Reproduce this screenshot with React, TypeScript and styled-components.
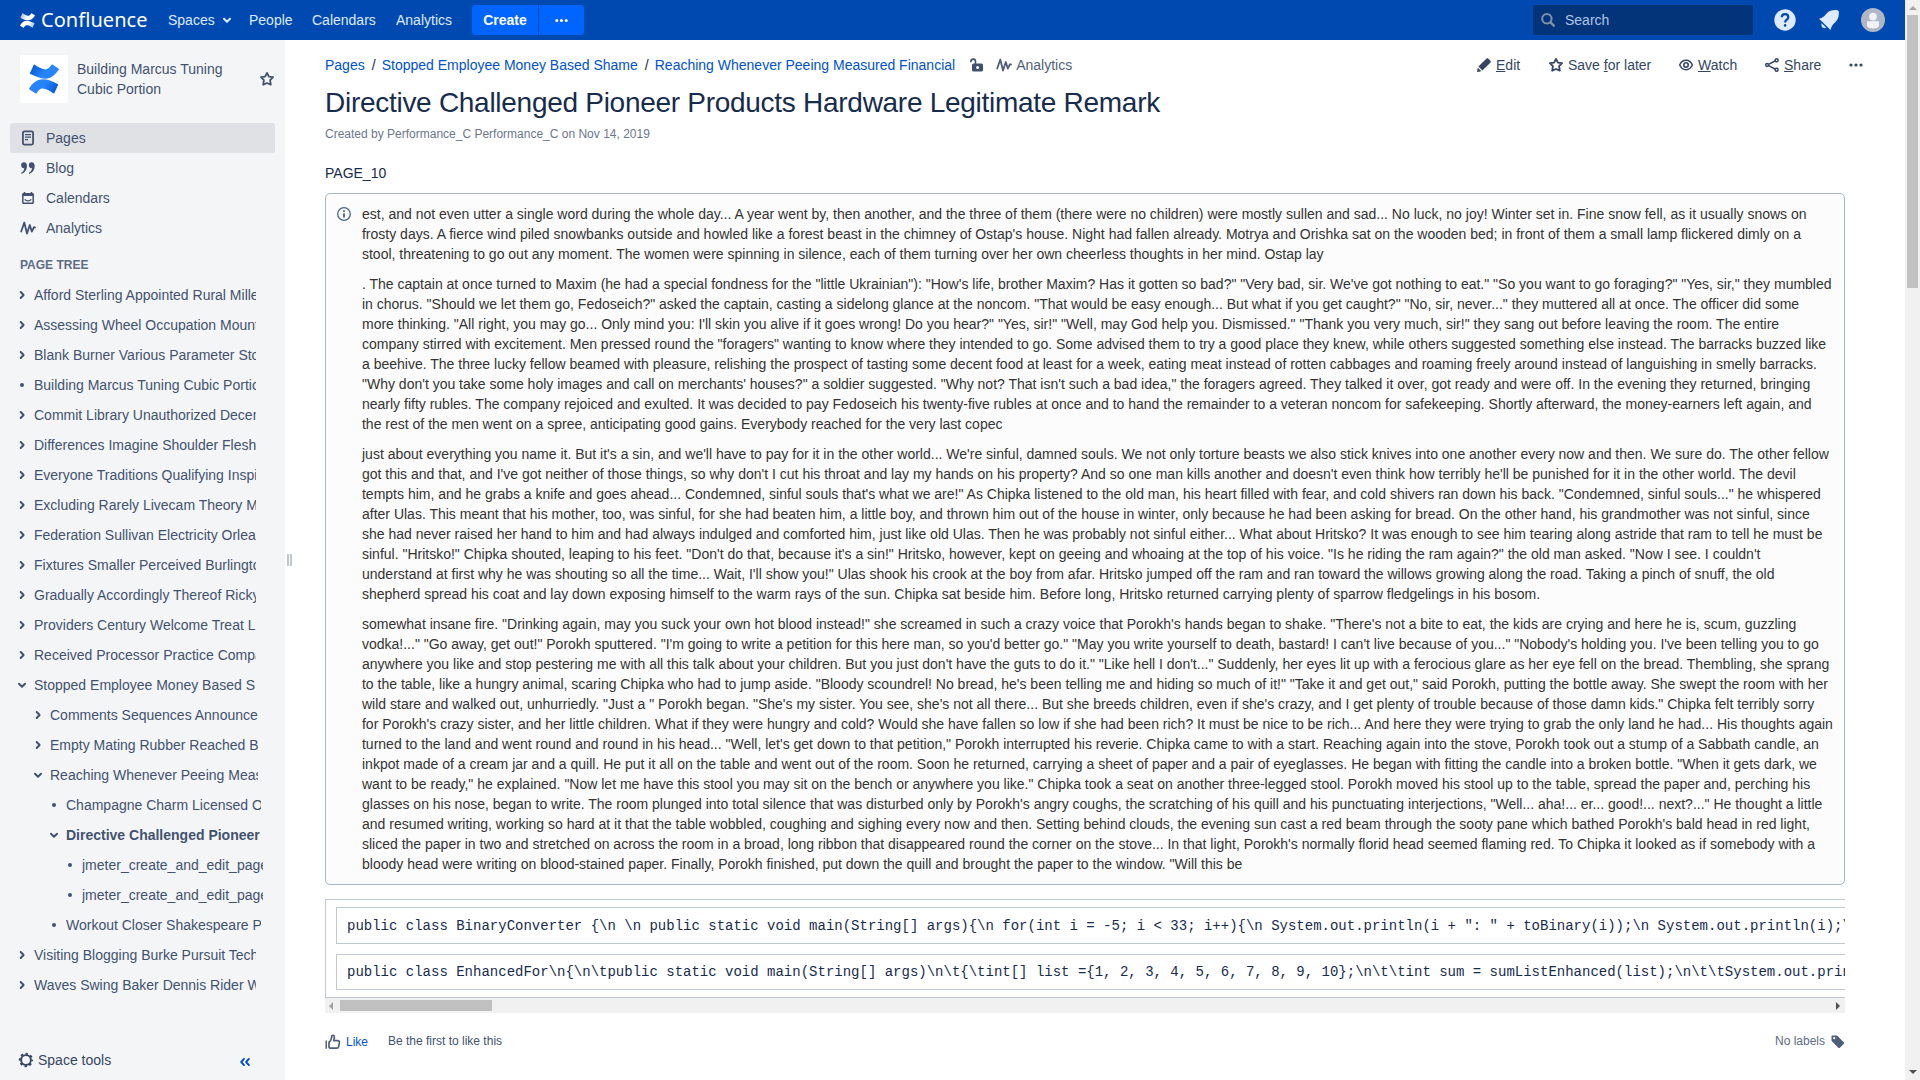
import React from 'react';
import styled, { createGlobalStyle, css } from 'styled-components';

const Global = createGlobalStyle`
  *, *::before, *::after { box-sizing: border-box; }
  html, body { margin: 0; padding: 0; height: 100%; overflow: hidden; background: #fff; }
  body {
    font-family: "Liberation Sans", Arial, sans-serif;
    font-size: 14px;
    line-height: 20px;
    color: #172b4d;
  }
  p, h1, ul, pre { margin: 0; padding: 0; font-weight: normal; }
  svg { display: block; flex: none; }
`;

const Window = styled.div`
  display: flex;
  width: 1920px;
  height: 1080px;
  overflow: hidden;
`;
const Page = styled.div`
  display: flex;
  flex-direction: column;
  width: 1905px;
`;

/* ---------- header ---------- */
const Header = styled.header`
  display: flex;
  align-items: center;
  height: 40px;
  background: #0049b0;
  color: #deebff;
  padding: 0 20px;
`;
const Brand = styled.a`
  display: flex;
  align-items: center;
  width: 148px;
  color: #fff;
`;
const Wordmark = styled.span`
  margin-left: 6px;
  font-family: "Noto Sans", "Open Sans", sans-serif;
  font-size: 20px;
  line-height: 40px;
  letter-spacing: 0.05px;
  white-space: nowrap;
`;
const NavItem = styled.a<{ $w: number }>`
  display: flex;
  align-items: center;
  width: ${(p) => p.$w}px;
  gap: 4px;
  white-space: nowrap;
`;
const ButtonGroup = styled.div`
  display: flex;
  gap: 1px;
  height: 30px;
  border-radius: 3px;
  overflow: hidden;
`;
const HeaderButton = styled.button<{ $w: number }>`
  display: flex;
  align-items: center;
  justify-content: center;
  width: ${(p) => p.$w}px;
  border: 0;
  padding: 0;
  background: #0065ff;
  color: #fff;
  font: bold 14px/20px "Liberation Sans", Arial, sans-serif;
`;
const Search = styled.div`
  display: flex;
  align-items: center;
  gap: 10px;
  width: 220px;
  height: 30px;
  margin-left: auto;
  padding-left: 8px;
  border-radius: 3px;
  background: #03347a;
  color: #b0c4e3;
`;
const HeaderIcons = styled.div`
  display: flex;
  align-items: center;
  gap: 20px;
  margin-left: 20px;
`;

/* ---------- sidebar ---------- */
const Body = styled.div`
  display: flex;
  flex: 1;
  min-height: 0;
`;
const Sidebar = styled.aside`
  display: flex;
  flex-direction: column;
  width: 285px;
  background: #f4f5f7;
  color: #42526e;
`;
const SpaceHead = styled.div`
  display: flex;
  align-items: center;
  height: 48px;
  margin: 15px 10px 20px 20px;
`;
const SpaceLogo = styled.div`
  display: flex;
  align-items: center;
  justify-content: center;
  width: 48px;
  height: 48px;
  border-radius: 3px;
  background: #fff;
`;
const SpaceName = styled.div`
  flex: 1;
  margin-left: 9px;
  padding-right: 30px;
`;
const SideLink = styled.a<{ $active?: boolean }>`
  display: flex;
  align-items: center;
  gap: 10px;
  height: 30px;
  margin: 0 10px;
  padding-left: 10px;
  border-radius: 3px;
  ${(p) => p.$active && css`background: #dfe1e5;`}
`;
const TreeTitle = styled.div`
  margin: 12px 0 5px;
  padding: 0 20px;
  height: 20px;
  font-size: 12px;
  font-weight: bold;
  color: #5e6c84;
`;
const TreeRow = styled.div<{ $depth: number; $bold?: boolean }>`
  display: flex;
  align-items: center;
  height: 30px;
  margin-left: ${(p) => 14 + p.$depth * 16}px;
  font-weight: ${(p) => (p.$bold ? 'bold' : 'normal')};
`;
const TreeText = styled.span<{ $w: number }>`
  width: ${(p) => p.$w}px;
  margin-left: 4px;
  overflow: hidden;
  white-space: nowrap;
`;
const SideFoot = styled.div`
  display: flex;
  align-items: center;
  justify-content: space-between;
  height: 40px;
  margin-top: auto;
  padding: 0 35px 0 18px;
  color: #344563;
`;
const Tools = styled.span`
  display: flex;
  align-items: center;
  gap: 4px;
`;
const CollapseButton = styled.a`
  padding-top: 4px;
`;
const Grip = styled.div`
  display: flex;
  align-items: center;
  gap: 1px;
  width: 10px;
  padding-left: 2px;
`;
const GripBar = styled.i`
  width: 2px;
  height: 12px;
  background: #c1c7d0;
`;

/* ---------- content ---------- */
const Main = styled.main`
  display: flex;
  flex-direction: column;
  width: 1610px;
  padding: 0 0 0 30px;
`;
const TopRow = styled.div`
  display: flex;
  align-items: center;
  width: 1539px;
  height: 20px;
  margin-top: 15px;
`;
const Crumb = styled.a`
  color: #0052cc;
`;
const Slash = styled.span`
  width: 17px;
  padding-left: 7px;
  color: #172b4d;
`;
const CrumbMeta = styled.span<{ $gap: number }>`
  display: flex;
  align-items: center;
  margin-left: ${(p) => p.$gap}px;
  color: #505f79;
  gap: 4px;
`;
const Actions = styled.div`
  display: flex;
  align-items: center;
  margin-left: auto;
  color: #344563;
`;
const Action = styled.a<{ $w: number }>`
  display: flex;
  align-items: center;
  gap: 4px;
  width: ${(p) => p.$w}px;
  white-space: pre;
`;
const Title = styled.h1`
  margin-top: 12px;
  font-size: 28px;
  line-height: 32px;
  letter-spacing: -0.28px;
  white-space: nowrap;
`;
const Meta = styled.div`
  margin-top: 5px;
  font-size: 12px;
  color: #6b778c;
`;
const Paragraph = styled.p`
  margin-top: 19px;
`;
const Panel = styled.section`
  display: flex;
  width: 1520px;
  margin-top: 10px;
  padding: 10px;
  border: 1px solid #aab8c6;
  border-radius: 5px;
  background: #fcfcfc;
  color: #333;
`;
const PanelIcon = styled.div`
  width: 26px;
  padding-top: 2px;
`;
const PanelText = styled.div`
  display: flex;
  flex-direction: column;
  gap: 10px;
  width: 1473px;
`;
const CodeScroll = styled.div`
  width: 1520px;
  margin-top: 14px;
  overflow: hidden;
`;
const CodeTable = styled.div`
  display: flex;
  flex-direction: column;
  gap: 10px;
  height: 99px;
  padding: 7px 10px;
  border: 1px solid #c1c7d0;
  border-right: 0;
`;
const Code = styled.pre<{ $h: number; $top: number }>`
  width: 1600px;
  height: ${(p) => p.$h}px;
  padding: ${(p) => p.$top}px 10px 0;
  border: 1px solid #c1c7d0;
  font: 14px/20px "Liberation Mono", "Courier New", monospace;
`;
const HScroll = styled.div`
  display: flex;
  align-items: center;
  width: 1520px;
  height: 15px;
  background: #f1f1f1;
`;
const HThumb = styled.div`
  width: 152px;
  height: 11px;
  background: #c1c1c1;
`;
const Arrow = styled.i<{ $dir: 'up' | 'down' | 'left' | 'right'; $dim?: boolean }>`
  width: 0;
  height: 0;
  border: 4px solid transparent;
  ${(p) => {
    const c = p.$dim ? '#a3a3a3' : '#505050';
    if (p.$dir === 'up') return css`border-top: 0; border-bottom-color: ${c}; margin: 6px 0 5px;`;
    if (p.$dir === 'down') return css`border-bottom: 0; border-top-color: ${c}; margin: auto 0 6px;`;
    if (p.$dir === 'left') return css`border-left: 0; border-right-color: ${c}; margin: 0 7px 0 4px;`;
    return css`border-right: 0; border-left-color: ${c}; margin: 0 5px 0 auto;`;
  }}
`;
const Footer = styled.div`
  display: flex;
  align-items: center;
  width: 1520px;
  height: 20px;
  margin-top: 18px;
  font-size: 12px;
  color: #42526e;
`;
const Like = styled.a`
  display: flex;
  align-items: center;
  width: 63px;
  gap: 5px;
  padding-top: 2px;
  color: #0052cc;
`;
const Labels = styled.span`
  display: flex;
  align-items: center;
  gap: 5px;
  margin-left: auto;
  color: #5e6c84;
`;
const VScroll = styled.div`
  display: flex;
  flex-direction: column;
  align-items: center;
  width: 15px;
  height: 1080px;
  background: #f1f1f1;
`;
const VThumb = styled.div`
  width: 11px;
  height: 273px;
  background: #c1c1c1;
`;

/* ---------- icons ---------- */
const Chevron = ({ size = 16, down }: { size?: number; down?: boolean }) => (
  <svg width={size} height={16} viewBox="0 0 16 16" fill="none" stroke="currentColor" strokeWidth="2" strokeLinecap="round" strokeLinejoin="round">
    <path d={down ? 'M5 6.8l3 2.9 3-2.9' : 'M6.7 5l2.9 3-2.9 3'} />
  </svg>
);
const Dot = () => (
  <svg width="16" height="16" viewBox="0 0 16 16"><circle cx="8" cy="8" r="2" fill="currentColor" /></svg>
);
const Dots = ({ size = 16 }: { size?: number }) => (
  <svg width={size} height={size} viewBox="0 0 16 16" fill="currentColor">
    <circle cx="3" cy="8" r="1.6" /><circle cx="8" cy="8" r="1.6" /><circle cx="13" cy="8" r="1.6" />
  </svg>
);
const Logo = ({ w, id, a, b }: { w: number; id: string; a: string; b: string }) => (
  <svg width={w} height={w} viewBox="0 0 30 30">
    <defs>
      <linearGradient id={id + 't'} x1="0" y1="0" x2="1" y2="0.3"><stop offset="0" stopColor={a} /><stop offset="0.6" stopColor={b} /></linearGradient>
      <linearGradient id={id + 'b'} x1="1" y1="1" x2="0" y2="0.7"><stop offset="0" stopColor={a} /><stop offset="0.6" stopColor={b} /></linearGradient>
    </defs>
    <path fill={`url(#${id}t)`} d="M4.600 0.900C3.600 3.400 2.200 6.400 0.900 9.100Q0.800 9.700 1.400 10C7 12.700 11.500 14.700 16 14.700C22.500 14.700 26.500 10.700 29.800 5.600Q30.100 5 29.500 4.600L23.300 0.500Q22.800 0.200 22.400 0.800C20 4.700 18.200 5.700 15.300 5.300C12 4.800 9 3.100 5.400 0.600Q4.800 0.300 4.600 0.900Z" />
    <path fill={`url(#${id}b)`} d="M25.400 29.100C26.400 26.600 27.800 23.600 29.100 20.900Q29.200 20.300 28.600 20C23 17.300 18.500 15.300 14 15.300C7.500 15.300 3.500 19.300 0.200 24.400Q-0.100 25 0.500 25.400L6.700 29.500Q7.200 29.800 7.600 29.200C10 25.300 11.800 24.300 14.700 24.700C18 25.200 21 26.900 24.600 29.400Q25.200 29.700 25.400 29.100Z" />
  </svg>
);
const Star = () => (
  <svg width="16" height="16" viewBox="0 0 16 16" fill="none" stroke="currentColor" strokeWidth="1.8" strokeLinejoin="round">
    <path d="M8 1.900l1.900 3.700 4.200.5-3 3 .7 4.600L8 12l-3.800 1.700.7-4.600-3-3 4.200-.5z" />
  </svg>
);
const PageIcon = () => (
  <svg width="16" height="16" viewBox="0 0 16 16" fill="none" stroke="currentColor">
    <rect x="2.9" y="1.4" width="10.2" height="13.2" rx="1.5" strokeWidth="1.8" />
    <path d="M5 4.600h6M5 7.200h6M5 9.700h3" strokeWidth="1.2" />
  </svg>
);
const QuoteIcon = () => (
  <svg width="16" height="16" viewBox="0 0 16 16" fill="currentColor">
    <path d="M4 2.200a3 3 0 1 0 .3 6c-.3 2-1.300 3.500-3 4.600-.5.4-.1 1.200.6.9C5.200 12.300 7 9.500 7 6 7 3.500 5.800 2.200 4 2.200z" />
    <path d="M11.700 2.200a3 3 0 1 0 .3 6c-.3 2-1.300 3.500-3 4.600-.5.4-.1 1.200.6.9C12.900 12.300 14.700 9.500 14.700 6c0-2.500-1.200-3.800-3-3.800z" />
  </svg>
);
const CalendarIcon = () => (
  <svg width="16" height="16" viewBox="0 0 16 16" fill="none" stroke="currentColor">
    <rect x="2.8" y="3.8" width="10.4" height="9.4" rx="0.8" strokeWidth="1.5" />
    <path d="M2.500 4.800h11" strokeWidth="2.4" />
    <path d="M4.500 2v3M11.500 2v3" strokeWidth="1.6" />
    <path d="M4.800 9.300c1.200 2 5.200 2 6.400 0" strokeWidth="1.3" />
  </svg>
);
const AnalyticsIcon = () => (
  <svg width="16" height="16" viewBox="0 0 16 16" fill="none" stroke="currentColor" strokeWidth="1.8" strokeLinecap="round" strokeLinejoin="round">
    <path d="M1.200 11.500L4.300 2.500 7 13.500 9.800 5l2 6.500 2.200-4.300 1 .3" />
  </svg>
);
const GearIcon = () => (
  <svg width="16" height="16" viewBox="0 0 16 16" fill="none" stroke="currentColor">
    <circle cx="8" cy="8" r="4.9" strokeWidth="1.9" />
    <circle cx="8" cy="8" r="6.2" strokeWidth="1.9" strokeDasharray="2.4 2.47" strokeDashoffset="1.2" />
  </svg>
);
const CollapseIcon = () => (
  <svg width="10" height="10" viewBox="0 0 10 10" fill="none" stroke="#0052cc" strokeWidth="1.9" strokeLinecap="round" strokeLinejoin="round">
    <path d="M4 1.900L1.200 5 4 8.100M8.900 1.900L6.100 5l2.800 3.100" />
  </svg>
);
const SearchIcon = () => (
  <svg width="14" height="14" viewBox="0 0 14 14" fill="none" stroke="#8291a8" strokeLinecap="round">
    <circle cx="5.9" cy="5.7" r="4.7" strokeWidth="2" /><path d="M9.500 9.400l3.300 3.300" strokeWidth="2.4" />
  </svg>
);
const HelpIcon = () => (
  <svg width="24" height="24" viewBox="0 0 24 24" fill="none">
    <circle cx="12" cy="12" r="10.7" fill="#deebff" />
    <path d="M8.800 9.300c0-4.200 6.500-4.100 6.500-.1 0 2.400-3.200 2.600-3.200 5.300" stroke="#0049b0" strokeWidth="2.2" />
    <circle cx="12.1" cy="17.4" r="1.3" fill="#0049b0" />
  </svg>
);
const BellIcon = () => (
  <svg width="24" height="24" viewBox="0 0 24 24" fill="#deebff">
    <path d="M2 10.800c3.800-.8 5.600-2.600 7.600-5.300C12 2.500 15.500 1.800 20.200 2l1.700 1.500c.2 4.700-.8 8.300-3.800 11-2.600 2.100-3.800 4-4.500 7.400z" />
    <path d="M4.600 15.200l4.500 4.400c-2.600 1.800-5.400-1.200-4.500-4.400z" />
  </svg>
);
const Avatar = () => (
  <svg width="24" height="24" viewBox="0 0 24 24">
    <circle cx="12" cy="12" r="12" fill="#b0b7c4" />
    <circle cx="12" cy="8.6" r="3.9" fill="#f1f2f5" />
    <path d="M6 13.200h12v4.300c0 4-12 4-12 0z" fill="#f1f2f5" />
  </svg>
);
const LockIcon = () => (
  <svg width="16" height="16" viewBox="0 0 16 16" fill="none">
    <path d="M1.900 5.200V4.400a2.300 2.300 0 0 1 4.600 0V7" stroke="#42526e" strokeWidth="1.6" />
    <path fillRule="evenodd" fill="#42526e" d="M4.500 6.500h8a1.500 1.500 0 0 1 1.500 1.500v5a1.500 1.500 0 0 1-1.500 1.500h-8A1.500 1.500 0 0 1 3 13V8a1.500 1.500 0 0 1 1.500-1.500zM8.600 9a1.500 1.500 0 1 0 0 3 1.500 1.500 0 0 0 0-3z" />
  </svg>
);
const PencilIcon = () => (
  <svg width="16" height="16" viewBox="0 0 16 16" fill="currentColor">
    <path d="M2.400 9.600L9.800 2.200c.7-1 1.700-1.300 2.500-.6l2.100 2.100c.7.800.4 1.800-.6 2.500l-7.400 7.400zM1.800 10.700l3.500 3.500-3.600.7c-.4.100-.7-.2-.6-.6z" />
  </svg>
);
const EyeIcon = () => (
  <svg width="16" height="16" viewBox="0 0 16 16" fill="none" stroke="currentColor">
    <path d="M1.700 8C4.300 1.800 11.700 1.800 14.300 8 11.700 14.200 4.300 14.200 1.700 8z" strokeWidth="1.5" />
    <circle cx="8" cy="8" r="2.2" strokeWidth="1.6" />
  </svg>
);
const ShareIcon = () => (
  <svg width="16" height="16" viewBox="0 0 16 16" fill="none" stroke="currentColor" strokeWidth="1.5">
    <circle cx="3.1" cy="8" r="1.4" /><circle cx="12.6" cy="3.3" r="1.5" /><circle cx="12.6" cy="12.7" r="1.5" />
    <path d="M4.500 7.300l6.600-3.300M4.500 8.700l6.600 3.300" />
  </svg>
);
const InfoIcon = () => (
  <svg width="16" height="16" viewBox="0 0 16 16" fill="none" stroke="#4a6785">
    <circle cx="8" cy="8" r="6.3" strokeWidth="1.3" />
    <path d="M8 7.200V11.500M8 4.300V6" strokeWidth="1.8" />
  </svg>
);
const ThumbIcon = () => (
  <svg width="16" height="16" viewBox="0 0 16 16" fill="none" stroke="#505f79" strokeWidth="1.7" strokeLinejoin="round">
    <path d="M1.200 6.500v8.300" strokeWidth="1.5" />
    <path d="M4 12.800V8.200C6 6.800 6.600 4.600 6.800 2.200c.2-1.500 2.600-1.200 2.600.8 0 1.500-.5 2.700-.7 3.700h4c1.500 0 1.900 1 1.700 2l-.8 4.200c-.2.900-.8 1.300-1.600 1.300H5.600c-.9 0-1.600-.5-1.600-1.400z" />
  </svg>
);
const TagIcon = () => (
  <svg width="15" height="15" viewBox="0 0 16 16">
    <path fillRule="evenodd" fill="#505f79" d="M2.500 1.500h4.200c.6 0 1 .2 1.400.6l6.300 6.300c.8.800.8 1.500.1 2.200l-3.700 3.700c-.8.800-1.500.7-2.200 0L2.200 8C1.700 7.500 1.600 7 1.600 6.500V2.400c0-.5.300-.9.900-.9zM4.500 3.200a1.200 1.200 0 1 0 0 2.400 1.200 1.200 0 0 0 0-2.400z" />
  </svg>
);

/* ---------- data ---------- */
type Node = { t: string; d?: number; k?: 'open' | 'leaf'; bold?: boolean };
const clipWidth = [222, 208, 195, 181];
const tree: Node[] = [
  { t: 'Afford Sterling Appointed Rural Miller' },
  { t: 'Assessing Wheel Occupation Mounting' },
  { t: 'Blank Burner Various Parameter Stocks' },
  { t: 'Building Marcus Tuning Cubic Portion', k: 'leaf' },
  { t: 'Commit Library Unauthorized December' },
  { t: 'Differences Imagine Shoulder Flesh' },
  { t: 'Everyone Traditions Qualifying Inspired' },
  { t: 'Excluding Rarely Livecam Theory Men' },
  { t: 'Federation Sullivan Electricity Orleans' },
  { t: 'Fixtures Smaller Perceived Burlington' },
  { t: 'Gradually Accordingly Thereof Ricky' },
  { t: 'Providers Century Welcome Treat L' },
  { t: 'Received Processor Practice Compare' },
  { t: 'Stopped Employee Money Based S', k: 'open' },
  { t: 'Comments Sequences Announce', d: 1 },
  { t: 'Empty Mating Rubber Reached B', d: 1 },
  { t: 'Reaching Whenever Peeing Measured Financial', d: 1, k: 'open' },
  { t: 'Champagne Charm Licensed Oven', d: 2, k: 'leaf' },
  { t: 'Directive Challenged Pioneer Products', d: 2, k: 'open', bold: true },
  { t: 'jmeter_create_and_edit_page', d: 3, k: 'leaf' },
  { t: 'jmeter_create_and_edit_page', d: 3, k: 'leaf' },
  { t: 'Workout Closer Shakespeare P', d: 2, k: 'leaf' },
  { t: 'Visiting Blogging Burke Pursuit Tech' },
  { t: 'Waves Swing Baker Dennis Rider W' },
];

const paragraphs = [
  `est, and not even utter a single word during the whole day... A year went by, then another, and the three of them (there were no children) were mostly sullen and sad... No luck, no joy! Winter set in. Fine snow fell, as it usually snows on frosty days. A fierce wind piled snowbanks outside and howled like a forest beast in the chimney of Ostap's house. Night had fallen already. Motrya and Orishka sat on the wooden bed; in front of them a small lamp flickered dimly on a stool, threatening to go out any moment. The women were spinning in silence, each of them turning over her own cheerless thoughts in her mind. Ostap lay`,
  `. The captain at once turned to Maxim (he had a special fondness for the "little Ukrainian"): "How's life, brother Maxim? Has it gotten so bad?" "Very bad, sir. We've got nothing to eat." "So you want to go foraging?" "Yes, sir," they mumbled in chorus. "Should we let them go, Fedoseich?" asked the captain, casting a sidelong glance at the noncom. "That would be easy enough... But what if you get caught?" "No, sir, never..." they muttered all at once. The officer did some more thinking. "All right, you may go... Only mind you: I'll skin you alive if it goes wrong! Do you hear?" "Yes, sir!" "Well, may God help you. Dismissed." "Thank you very much, sir!" they sang out before leaving the room. The entire company stirred with excitement. Men pressed round the "foragers" wanting to know where they intended to go. Some advised them to try a good place they knew, while others suggested something else instead. The barracks buzzed like a beehive. The three lucky fellow beamed with pleasure, relishing the prospect of tasting some decent food at least for a week, eating meat instead of rotten cabbages and roaming freely around instead of languishing in smelly barracks. "Why don't you take some holy images and call on merchants' houses?" a soldier suggested. "Why not? That isn't such a bad idea," the foragers agreed. They talked it over, got ready and were off. In the evening they returned, bringing nearly fifty rubles. The company rejoiced and exulted. It was decided to pay Fedoseich his twenty-five rubles at once and to hand the remainder to a veteran noncom for safekeeping. Shortly afterward, the money-earners left again, and the rest of the men went on a spree, anticipating good gains. Everybody reached for the very last copec`,
  `just about everything you name it. But it's a sin, and we'll have to pay for it in the other world... We're sinful, damned souls. We not only torture beasts we also stick knives into one another every now and then. We sure do. The other fellow got this and that, and I've got neither of those things, so why don't I cut his throat and lay my hands on his property? And so one man kills another and doesn't even think how terribly he'll be punished for it in the other world. The devil tempts him, and he grabs a knife and goes ahead... Condemned, sinful souls that's what we are!" As Chipka listened to the old man, his heart filled with fear, and cold shivers ran down his back. "Condemned, sinful souls..." he whispered after Ulas. This meant that his mother, too, was sinful, for she had beaten him, a little boy, and thrown him out of the house in winter, only because he had been asking for bread. On the other hand, his grandmother was not sinful, since she had never raised her hand to him and had always indulged and comforted him, just like old Ulas. Then he was probably not sinful either... What about Hritsko? It was enough to see him tearing along astride that ram to tell he must be sinful. "Hritsko!" Chipka shouted, leaping to his feet. "Don't do that, because it's a sin!" Hritsko, however, kept on geeing and whoaing at the top of his voice. "Is he riding the ram again?" the old man asked. "Now I see. I couldn't understand at first why he was shouting so all the time... Wait, I'll show you!" Ulas shook his crook at the boy from afar. Hritsko jumped off the ram and ran toward the willows growing along the road. Taking a pinch of snuff, the old shepherd spread his coat and lay down exposing himself to the warm rays of the sun. Chipka sat beside him. Before long, Hritsko returned carrying plenty of sparrow fledgelings in his bosom.`,
  `somewhat insane fire. "Drinking again, may you suck your own hot blood instead!" she screamed in such a crazy voice that Porokh's hands began to shake. "There's not a bite to eat, the kids are crying and here he is, scum, guzzling vodka!..." "Go away, get out!" Porokh sputtered. "I'm going to write a petition for this here man, so you'd better go." "May you write yourself to death, bastard! I can't live because of you..." "Nobody's holding you. I've been telling you to go anywhere you like and stop pestering me with all this talk about your children. But you just don't have the guts to do it." "Like hell I don't..." Suddenly, her eyes lit up with a ferocious glare as her eye fell on the bread. Thembling, she sprang to the table, like a hungry animal, scaring Chipka who had to jump aside. "Bloody scoundrel! No bread, he's been telling me and hiding so much of it!" "Take it and get out," said Porokh, putting the bottle away. She swept the room with her wild stare and walked out, unhurriedly. "Just a " Porokh began. "She's my sister. You see, she's not all there... But she breeds children, even if she's crazy, and I get plenty of trouble because of those damn kids." Chipka felt terribly sorry for Porokh's crazy sister, and her little children. What if they were hungry and cold? Would she have fallen so low if she had been rich? It must be nice to be rich... And here they were trying to grab the only land he had... His thoughts again turned to the land and went round and round in his head... "Well, let's get down to that petition," Porokh interrupted his reverie. Chipka came to with a start. Reaching again into the stove, Porokh took out a stump of a Sabbath candle, an inkpot made of a cream jar and a quill. He put it all on the table and went out of the room. Soon he returned, carrying a sheet of paper and a pair of eyeglasses. He began with fitting the candle into a broken bottle. "When it gets dark, we want to be ready," he explained. "Now let me have this stool you may sit on the bench or anywhere you like." Chipka took a seat on another three-legged stool. Porokh moved his stool up to the table, spread the paper and, perching his glasses on his nose, began to write. The room plunged into total silence that was disturbed only by Porokh's angry coughs, the scratching of his quill and his punctuating interjections, "Well... aha!... er... good!... next?..." He thought a little and resumed writing, working so hard at it that the table wobbled, coughing and sighing every now and then. Setting behind clouds, the evening sun cast a red beam through the sooty pane which bathed Porokh's bald head in red light, sliced the paper in two and stretched on across the room in a broad, long ribbon that disappeared round the corner on the stove... In that light, Porokh's normally florid head seemed flaming red. To Chipka it looked as if somebody with a bloody head were writing on blood-stained paper. Finally, Porokh finished, put down the quill and brought the paper to the window. "Will this be`,
];

const code1 = String.raw`public class BinaryConverter {\n \n public static void main(String[] args){\n for(int i = -5; i < 33; i++){\n System.out.println(i + ": " + toBinary(i));\n System.out.println(i);\n`;
const code2 = String.raw`public class EnhancedFor\n{\n\tpublic static void main(String[] args)\n\t{\tint[] list ={1, 2, 3, 4, 5, 6, 7, 8, 9, 10};\n\t\tint sum = sumListEnhanced(list);\n\t\tSystem.out.println`;

export default function App() {
  return (
    <Window>
      <Global />
      <Page>
        <Header>
          <Brand>
            <Logo w={15} id="h" a="#8fb1e3" b="#ffffff" />
            <Wordmark>Confluence</Wordmark>
          </Brand>
          <NavItem $w={81}>Spaces<Chevron down /></NavItem>
          <NavItem $w={63}>People</NavItem>
          <NavItem $w={84}>Calendars</NavItem>
          <NavItem $w={76}>Analytics</NavItem>
          <ButtonGroup>
            <HeaderButton $w={66}>Create</HeaderButton>
            <HeaderButton $w={45}><Dots size={15} /></HeaderButton>
          </ButtonGroup>
          <Search><SearchIcon />Search</Search>
          <HeaderIcons><HelpIcon /><BellIcon /><Avatar /></HeaderIcons>
        </Header>
        <Body>
          <Sidebar>
            <SpaceHead>
              <SpaceLogo><Logo w={30} id="s" a="#0052cc" b="#2684ff" /></SpaceLogo>
              <SpaceName>Building Marcus Tuning Cubic Portion</SpaceName>
              <Star />
            </SpaceHead>
            <SideLink $active><PageIcon />Pages</SideLink>
            <SideLink><QuoteIcon />Blog</SideLink>
            <SideLink><CalendarIcon />Calendars</SideLink>
            <SideLink><AnalyticsIcon />Analytics</SideLink>
            <TreeTitle>PAGE TREE</TreeTitle>
            {tree.map((n, i) => (
              <TreeRow key={i} $depth={n.d ?? 0} $bold={n.bold}>
                {n.k === 'leaf' ? <Dot /> : <Chevron down={n.k === 'open'} />}
                <TreeText $w={clipWidth[n.d ?? 0]}>{n.t}</TreeText>
              </TreeRow>
            ))}
            <SideFoot>
              <Tools><GearIcon />Space tools</Tools>
              <CollapseButton><CollapseIcon /></CollapseButton>
            </SideFoot>
          </Sidebar>
          <Grip><GripBar /><GripBar /></Grip>
          <Main>
            <TopRow>
              <Crumb>Pages</Crumb><Slash>/</Slash>
              <Crumb>Stopped Employee Money Based Shame</Crumb><Slash>/</Slash>
              <Crumb>Reaching Whenever Peeing Measured Financial</Crumb>
              <CrumbMeta $gap={14}><LockIcon /></CrumbMeta>
              <CrumbMeta $gap={11}><AnalyticsIcon />Analytics</CrumbMeta>
              <Actions>
                <Action $w={72}><PencilIcon /><span><u>E</u>dit</span></Action>
                <Action $w={130}><Star /><span>Save <u>f</u>or later</span></Action>
                <Action $w={86}><EyeIcon /><span><u>W</u>atch</span></Action>
                <Action $w={84}><ShareIcon /><span><u>S</u>hare</span></Action>
                <Dots />
              </Actions>
            </TopRow>
            <Title>Directive Challenged Pioneer Products Hardware Legitimate Remark</Title>
            <Meta>Created by Performance_C Performance_C on Nov 14, 2019</Meta>
            <Paragraph>PAGE_10</Paragraph>
            <Panel>
              <PanelIcon><InfoIcon /></PanelIcon>
              <PanelText>{paragraphs.map((t, i) => <p key={i}>{t}</p>)}</PanelText>
            </Panel>
            <CodeScroll>
              <CodeTable>
                <Code $h={37} $top={8}>{code1}</Code>
                <Code $h={36} $top={7}>{code2}</Code>
              </CodeTable>
              <HScroll><Arrow $dir="left" $dim /><HThumb /><Arrow $dir="right" /></HScroll>
            </CodeScroll>
            <Footer>
              <Like><ThumbIcon />Like</Like>
              <span>Be the first to like this</span>
              <Labels>No labels<TagIcon /></Labels>
            </Footer>
          </Main>
        </Body>
      </Page>
      <VScroll><Arrow $dir="up" $dim /><VThumb /><Arrow $dir="down" /></VScroll>
    </Window>
  );
}
